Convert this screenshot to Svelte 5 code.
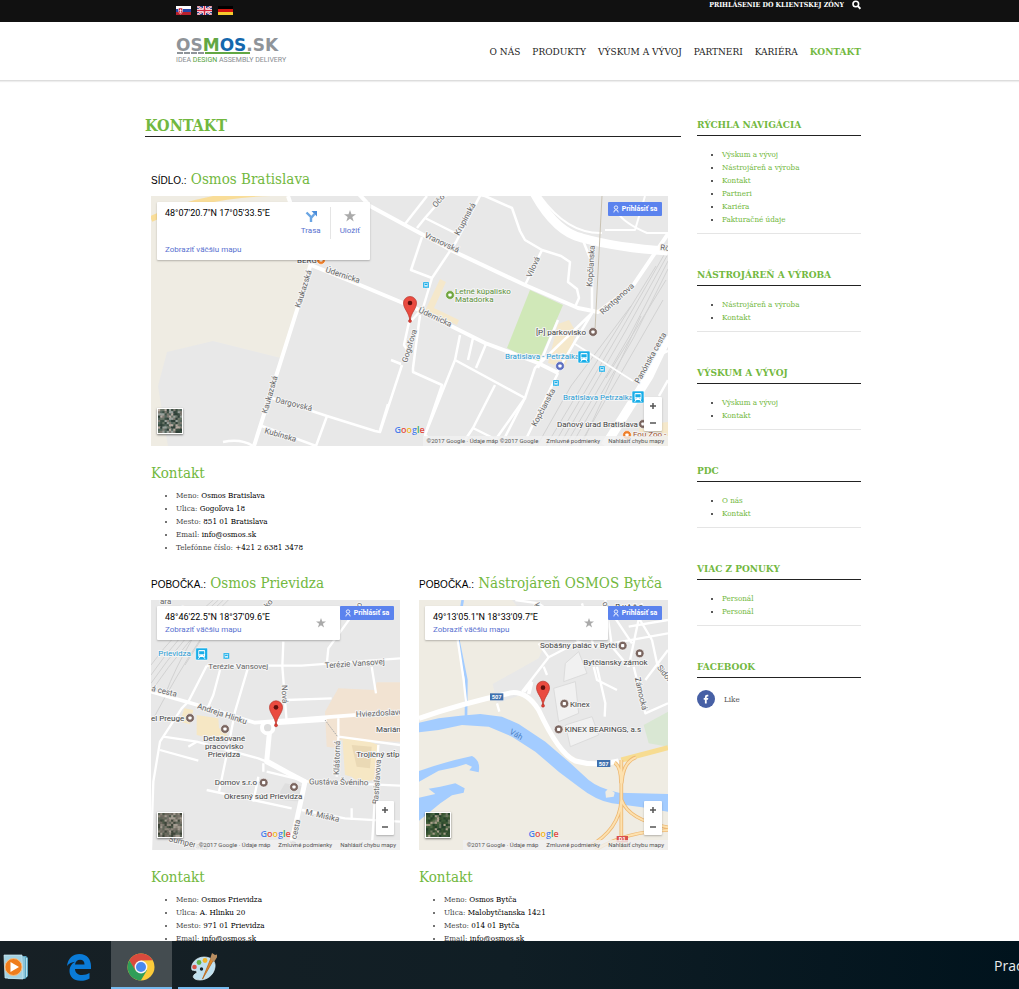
<script>
  const nav = ['O NÁS', 'PRODUKTY', 'VÝSKUM A VÝVOJ', 'PARTNERI', 'KARIÉRA', 'KONTAKT'];

  const sections = [
    { title: 'RÝCHLA NAVIGÁCIA', links: ['Výskum a vývoj', 'Nástrojáreň a výroba', 'Kontakt', 'Partneri', 'Kariéra', 'Fakturačné údaje'] },
    { title: 'NÁSTROJÁREŇ A VÝROBA', links: ['Nástrojáreň a výroba', 'Kontakt'] },
    { title: 'VÝSKUM A VÝVOJ', links: ['Výskum a vývoj', 'Kontakt'] },
    { title: 'PDC', links: ['O nás', 'Kontakt'] },
    { title: 'VIAC Z PONUKY', links: ['Personál', 'Personál'] }
  ];

  const offices = [
    {
      kind: 'SÍDLO.:', name: 'Osmos Bratislava', coords: '48°07\'20.7"N 17°05\'33.5"E', map: 'bratislava', wide: true,
      rows: [['Meno', 'Osmos Bratislava'], ['Ulica', 'Gogoľova 18'], ['Mesto', '851 01 Bratislava'], ['Email', 'info@osmos.sk'], ['Telefónne číslo', '+421 2 6381 3478']]
    },
    {
      kind: 'POBOČKA.:', name: 'Osmos Prievidza', coords: '48°46\'22.5"N 18°37\'09.6"E', map: 'prievidza',
      rows: [['Meno', 'Osmos Prievidza'], ['Ulica', 'A. Hlinku 20'], ['Mesto', '971 01 Prievidza'], ['Email', 'info@osmos.sk']]
    },
    {
      kind: 'POBOČKA.:', name: 'Nástrojáreň OSMOS Bytča', coords: '49°13\'05.1"N 18°33\'09.7"E', map: 'bytca',
      rows: [['Meno', 'Osmos Bytča'], ['Ulica', 'Malobytčianska 1421'], ['Mesto', '014 01 Bytča'], ['Email', 'info@osmos.sk']]
    }
  ];

  // Labels: x, y, text, rotation, style
  const labels = {
    bratislava: [
      [146, 67, 'BERG', 0, 'poi'],
      [174, 76, 'Údernícka', 18, 'road'], [267, 116, 'Údernícka', 25, 'road'],
      [149, 112, 'Kaukazská', -72, 'road'], [116, 218, 'Kaukazská', -74, 'road'],
      [124, 206, 'Dargovská', 14, 'road'], [113, 237, 'Kubínska', 16, 'road'],
      [256, 167, 'Gogoľova', -73, 'road'], [273, 41, 'Vranovská', 25, 'road'],
      [308, 40, 'Krupinská', -62, 'road'], [285, 12, 'Očov', -50, 'road'],
      [380, 82, 'Vilová', -65, 'road'], [441, 91, 'Kopčianska', -86, 'road'],
      [452, 119, 'Röntgenova', -42, 'road'], [385, 231, 'Kopčianska', -62, 'road'],
      [488, 188, 'Panónska cesta', -61, 'road'], [509, 54, 'Rö', 5, 'road'],
      [304, 98, 'Letné kúpalisko', 0, 'park'], [304, 106, 'Matadorka', 0, 'park'],
      [385, 139, '[P] parkovisko', 0, 'poi'],
      [354, 163, 'Bratislava - Petržalka', 0, 'rail'], [412, 204, 'Bratislava Petrzalka', 0, 'rail'],
      [406, 231, 'Daňový úrad Bratislava', 0, 'poi'], [482, 241, 'Fou Zoo -', 0, 'shop']
    ],
    prievidza: [
      [40, 182, 'Prievidza', 0, 'rail'], [190, 223, 'Terézie Vansovej', 0, 'road'],
      [540, 220, 'Terézie Vansovej', -4, 'road'], [410, 270, 'Nová', 88, 'road'],
      [18, 287, 'á cesta', 14, 'road'], [155, 340, 'Andreja Hlinku', 18, 'road'],
      [18, 377, 'el Preuge', 0, 'poi'], [633, 366, 'Hviezdoslavova', -3, 'road'],
      [693, 410, 'Marián', 0, 'poi'], [175, 437, 'Detašované', 0, 'poi'],
      [180, 461, 'pracovisko', 0, 'poi'], [188, 485, 'Prievidza', 0, 'poi'],
      [634, 487, 'Trojičný stĺp', 0, 'poi'], [582, 540, 'Kláštorná', -88, 'road'],
      [492, 568, 'Gustáva Švéniho', 1, 'road'], [699, 628, 'Rastislavova', -86, 'road'],
      [209, 571, 'Domov s.r.o', 0, 'poi'], [237, 611, 'Okresný súd Prievidza', 0, 'poi'],
      [480, 658, 'M. Mišíka', 13, 'road'], [450, 752, 'á cesta', -78, 'road'],
      [70, 738, 'Šumperská', 14, 'road'], [45, 27, 'ara', 0, 'road'],
      [105, 48, 'Nov', 20, 'road'], [360, 50, 'sko', -50, 'road'], [645, 50, 'ko', -75, 'road']
    ],
    bytca: [
      [610, 117, 'B y t č a', 0, 'poi'], [384, 235, 'Sobášny palác v Bytči', 0, 'poi'],
      [514, 284, 'Bytčiansky zámok', 0, 'poi'], [734, 293, 'Sidónie', 52, 'road'],
      [668, 324, 'Zámocká', 77, 'road'], [474, 410, 'Kinex', 0, 'poi'],
      [458, 487, 'KINEX BEARINGS, a.s', 0, 'poi'], [291, 490, 'Váh', 30, 'water'],
      [366, 104, 'ká', 60, 'road'], [570, 100, 'ova', 60, 'road']
    ]
  };

  // Aerial thumbnails: small colour patches from a repeatable sequence
  const tones = {
    bratislava: ['#3c4f43', '#6b7669', '#98a09b', '#54675f', '#b5aaa1', '#2f4038', '#7f7b72'],
    prievidza: ['#6f6b60', '#4c5747', '#8d867a', '#5f6658', '#a39b90', '#3f463a', '#77736a'],
    bytca: ['#2f4a30', '#3d5b38', '#24402a', '#506a45', '#a89f8a', '#38522f', '#6f7862']
  };
  function patches(name) {
    let seed = name.length * 131;
    return Array.from({ length: 121 }, (_, i) => {
      seed = (seed * 1103515245 + 12345) % 2147483648;
      return { x: (i % 11) * 2 + 1, y: Math.floor(i / 11) * 2 + 1, fill: tones[name][Math.floor(seed / 65536) % 7] };
    });
  }
</script>

{#snippet labelSet(name, unit)}
  {#each labels[name] as [x, y, text, turn, tone]}
    <text class="label {tone}" {x} {y} transform="rotate({turn} {x} {y})" font-size={8 * unit} stroke-width={2 * unit}>{text}</text>
  {/each}
{/snippet}

{#snippet train(x, y, s)}
  <g transform="translate({x} {y}) scale({s})">
    <rect x="-6" y="-6" width="12" height="12" rx="1" fill="#19aee8" stroke="#fff" stroke-width=".6" />
    <rect x="-3.4" y="-4" width="6.8" height="7" rx="1" fill="#fff" />
    <path d="M-2.3-2.6h4.6V0h-4.6zM-2.4 1.4h1M1.4 1.4h1" fill="#19aee8" stroke="#19aee8" stroke-width=".6" />
    <path d="M-2 3-3.3 4.8M2 3 3.3 4.8" stroke="#fff" />
  </g>
{/snippet}

{#snippet dot(x, y, s, color)}
  <g transform="translate({x} {y}) scale({s})">
    <circle r="4.4" fill={color} stroke="#fff" stroke-width=".6" />
    <rect x="-1.600" y="-1.600" width="3.200" height="3.200" rx=".8" fill="#fff" />
  </g>
{/snippet}

{#snippet pin(x, y, s)}
  <g transform="translate({x} {y}) scale({s})">
    <path d="M0 0C-1-9-6.5-12-6.5-18a6.5 6.5 0 0 1 13 0C6.500-12 1-9 0 0Z" fill="#ea4b40" stroke="#b8332a" stroke-width=".7" />
    <circle cy="-18" r="2.3" fill="#5e100d" />
    <circle r="1.500" fill="#e23d33" stroke="#a72820" stroke-width=".5" />
  </g>
{/snippet}

{#snippet bratislava()}
  <svg class="canvas" viewBox="0 0 517 250" preserveAspectRatio="xMidYMid slice" aria-hidden="true">
    <rect width="517" height="250" fill="#e8e8e8" />
    <path d="M0 0H137L160 67 146 114 130 162 62 145 16 156 7 190 17 250H0Z" fill="#efece3" />
    <path d="M0 23Q50-1 120-3" fill="none" stroke="#f9dd98" stroke-width="6" />
    <path d="M379 94 412 109 387 167 356 152Z" fill="#d0e8b8" />
    <path d="M289 83 295 86 283 112 308 124 306 129 274 115ZM407 128 418 124 425 136 414 172 397 167Z" fill="#f5e8cb" />
    <path d="M488 250V229L517 226V250Z" fill="#f5e8cb" />
    <g class="tracks">
      <path d="M517 52 470 134 402 250M517 58 474 136 408 250M517 65 479 139 414 250M517 73 483 141 420 250M515 84 455 182M505 70 440 175 395 250M512 104 428 250M480 110 420 190 386 250M490 120 430 250" />
    </g>
    <g class="streets">
      <path class="mid" d="M137 0 160 67 146 114 103 250M160 69 209 89 264 112 304 132 334 147 387 167 407 177" />
      <path class="mid" d="M205-5 219 10 254 29 304 56 374 89 427 112 447 116 481 91 504 57 517 38" />
      <path d="M317-3 334 0 361 12 369 35 374 44 391 54 410 60 419 66 417 86 426 93 428 102 424 111M391 54 374 89" />
      <path d="M331-4 305 46 281 82 272 112 260 125 258 126M271 41 260 74 281 82M266 32 274 22 304 37M274 22 295-2M254 28 276 0" />
      <path d="M431 42 441 67 441 117 406 176M441 117 384 172 374 202 340 250M407 177 376 241M407 124 387 172" />
      <path d="M258 126 253 149 257 155M251 169 229 236 224 235 176 220 118 201M240 164 250 168M237 208 229 234M176 220 165 250M111 230 165 250M72 246Q90 242 102 250" />
      <path d="M269 119 262 172 262 176 291 189 274 239M309 139 304 164 274 239 285 248M304 164 374 202 352 245M322 142 317 164M344 189 322 232 350 246M322 232 310 250M335 148 325 172" />
      <path d="M387-3Q415 38 451 37M454 34 484 34 494 0M467 17Q473 27 496 37H517M424 148 482 185" stroke-width="2" />
      <path d="M494 182Q503 160 517 155M508 200 517 184" />
      <path class="main" d="M382-5Q404 36 431 42 467 52 517 55" />
      <path class="main" d="M517 140 498 180 454 250" />
    </g>
    <path d="M451 0 444 134" stroke="#c9c2b2" />
    {@render labelSet('bratislava', 1)}
    {@render dot(170, 64, 1, '#ee7e28')}
    {@render dot(299, 99, 1, '#71a53f')}
    {@render dot(442, 136, 1, '#7b6660')}
    {@render dot(409, 170, 1, '#5d6fc0')}
    {@render dot(492, 228, 1, '#7b6660')}
    {@render dot(476, 239, 1, '#ee7e28')}
    {@render train(433, 161, 1)}
    {@render train(487, 201, 1)}
    {@render train(275, 89, 0.5)}
    {@render train(405, 187, 0.5)}
    {@render train(451, 173, 0.5)}
    {@render pin(259, 125, 1)}
  </svg>
{/snippet}

{#snippet prievidza()}
  <svg class="canvas" viewBox="18 15 747 750" preserveAspectRatio="xMidYMid slice" aria-hidden="true">
    <rect x="18" y="15" width="747" height="750" fill="#e8e8e8" />
    <path d="M540 350 580 280 690 285 695 262H765V440L590 435 580 460 545 455Z" fill="#f2e3d2" />
    <path d="M592 430 655 433 700 450 695 555 640 560 620 545 600 540ZM155 360 220 370 222 400 245 405V440L155 420ZM118 340 145 345 135 388 105 380Z" fill="#f6e7c4" />
    <path d="M620 450 680 455 675 520 635 515Z" fill="#ead9b5" />
    <path d="M405 590 420 565 480 575 470 620 410 615Z" fill="#dfdfdf" />
    <g class="tracks tripled">
      <path d="M220 15Q100 120 18 240M235 15Q110 130 18 265M250 15Q120 140 18 290M205 15Q90 110 18 210M140 135Q90 220 60 300M165 135Q100 230 20 380M190 100 120 210" />
    </g>
    <g class="streets tripled">
      <path d="M185 212H470L765 190M185 212 130 320M225 225 205 300 185 345M310 215 270 350 245 480 222 590M415 140 412 215 425 380M545 210 550 160 615 70M680 215 693 295" />
      <path d="M425 315 560 310M55 425 155 440 340 490 365 500M155 440 130 455M45 465 160 497M185 585 440 640M340 545 325 620M18 765 25 560 45 440 110 340 130 320M580 370V425L765 450M700 450 680 765M620 640V675M580 425 575 545" />
      <path d="M365 530 490 560 765 572M470 645 600 670 765 680M355 530V505M300 65 325 40" />
      <path class="mid3" d="M18 290 150 328 330 383 765 350M390 385 545 375" />
      <path class="main3" d="M375 395 365 500 480 560 465 630 435 765M365 498 450 545" />
    </g>
    <circle cx="368" cy="398" r="17" fill="#ddd" stroke="#fff" stroke-width="12" />
    <path d="M540 375 578 425" stroke="#aaa" stroke-width="3" stroke-dasharray="5 3" />
    {@render labelSet('prievidza', 3)}
    {@render train(170, 177, 3)}
    {@render train(244, 183, 1.5)}
    {@render dot(135, 369, 3, '#7b6660')}
    {@render dot(240, 402, 3, '#7b6660')}
    {@render dot(356, 563, 3, '#7b6660')}
    {@render dot(447, 576, 3, '#7b6660')}
    {@render pin(393, 391, 3)}
  </svg>
{/snippet}

{#snippet bytca()}
  <svg class="canvas" viewBox="21 90 747 750" preserveAspectRatio="xMidYMid slice" aria-hidden="true">
    <rect x="21" y="90" width="747" height="750" fill="#efece3" />
    <path d="M300 90H768V530L620 570 520 580 460 545 400 450 365 385 340 370 255 400 242 342 380 265 400 220Z" fill="#e8e8e8" />
    <path d="M695 465 768 425V530L710 520Z" fill="#d9e7d3" />
    <path d="M425 355 490 335 500 430 440 455ZM460 280 500 245 525 310 455 335ZM460 465 540 440 560 495 475 530Z" fill="#f1f1f1" stroke="#dcdcdc" stroke-width="3" />
    <path d="M152 90 135 190 163 330 162 440" fill="none" stroke="#a3ccff" stroke-width="8" />
    <path d="M21 458 80 445 145 437 205 432 270 440 320 462 400 515 470 575 530 630Q560 655 620 668L768 672V725L690 712 600 700Q550 690 500 650L440 605 370 545 300 500 230 470 150 465 80 480 21 487Z" fill="#a3ccff" />
    <path d="M21 603Q100 575 180 558Q207 572 200 607L172 601 180 590 162 582 130 592 80 602 21 635Z" fill="#a3ccff" />
    <path d="M21 683 70 672 50 656 85 650 130 640 158 655 155 668 120 676 85 700 21 752Z" fill="#a3ccff" />
    <path d="M580 665 590 655 608 668 605 680 582 683Z" fill="#efece3" />
    <g class="streets tripled">
      <path d="M135 195 155 330 163 405M310 90 380 100 450 150 500 215M380 220 410 262 330 365M500 215 410 262M395 290 405 315M500 215 545 230 768 190M510 100 545 230M580 90 600 230 650 290M650 170 768 150M690 100 650 290M720 210 735 280 768 320M555 290 580 400 578 440M545 290 555 330 615 360M665 290 700 430 768 400M660 110 720 210M600 130 660 220M255 400 262 425M768 240 700 330" />
      <path class="main3" d="M21 445Q150 400 300 368 345 365 380 420 440 550 490 573 550 590 620 573" />
      <path class="mid3" d="M335 365 360 335M350 372 358 340" />
    </g>
    <path d="M628 570 768 533" fill="none" stroke="#f7dc91" stroke-width="15" />
    <g fill="none" stroke="#edb873" stroke-width="11">
      <path d="M628 570V840M608 578Q627 590 627 640M672 562Q633 575 629 640M628 690Q622 780 530 830M629 690Q650 750 768 772M768 780Q640 785 550 840" />
    </g>
    <g fill="none" stroke="#fde1af" stroke-width="6">
      <path d="M628 570V840M608 578Q627 590 627 640M672 562Q633 575 629 640M628 690Q622 780 530 830M629 690Q650 750 768 772M768 780Q640 785 550 840" />
    </g>
    {@render labelSet('bytca', 3)}
    {#each [[234, 370], [555, 570]] as [x, y]}
      <rect {x} {y} width="40" height="21" fill="#3f70ae" />
      <text class="shield" x={x + 20} y={y + 17}>507</text>
    {/each}
    <rect x="614" y="798" width="34" height="19" fill="#d9504c" />
    <text class="shield" x="631" y="814">D1</text>
    {@render dot(632, 227, 3, '#7b6660')}
    {@render dot(683, 250, 3, '#7b6660')}
    {@render dot(457, 401, 3, '#7b6660')}
    {@render dot(440, 478, 3, '#7b6660')}
    {@render pin(393, 407, 3)}
  </svg>
{/snippet}

{#snippet star()}
  <svg class="star" viewBox="0 0 12 12" aria-hidden="true"><path d="M6 0 7.500 4.300H12L8.300 7 9.700 11.500 6 8.800 2.300 11.500 3.700 7 0 4.300H4.500Z" fill="#aaa" /></svg>
{/snippet}

<div class="screen">
  <div class="page">
    <div class="topbar">
      <div class="inner">
        <div class="flags">
          <a href="#sk" aria-label="Slovensky">
            <svg viewBox="0 0 15 9"><path fill="#fff" d="M0 0h15v3H0z" /><path fill="#2545a8" d="M0 3h15v3H0z" /><path fill="#b8202e" d="M0 6h15v3H0z" /><path fill="#d5263b" stroke="#fff" stroke-width=".5" d="M2.500 2h4v3q0 2-2 3-2-1-2-3z" /><path stroke="#fff" stroke-width=".7" d="M4.500 3v4M3.300 4.500h2.400" /></svg>
          </a>
          <a href="#en" aria-label="English">
            <svg viewBox="0 0 15 9"><path fill="#2a3f86" d="M0 0h15v9H0z" /><path stroke="#fff" stroke-width="2" d="m0 0 15 9M15 0 0 9" /><path stroke="#cf2540" stroke-width=".7" d="m0 0 15 9M15 0 0 9" /><path stroke="#fff" stroke-width="3" d="M7.500 0v9M0 4.500h15" /><path stroke="#cf2540" stroke-width="1.600" d="M7.500 0v9M0 4.500h15" /></svg>
          </a>
          <a href="#de" aria-label="Deutsch">
            <svg viewBox="0 0 15 9"><path d="M0 0h15v3H0z" /><path fill="#d2150f" d="M0 3h15v3H0z" /><path fill="#f6cb2e" d="M0 6h15v3H0z" /></svg>
          </a>
        </div>
        <div class="account">
          <a href="#login">PRIHLÁSENIE DO KLIENTSKEJ ZÓNY</a>
          <button aria-label="Hľadať">
            <svg viewBox="0 0 9 10"><circle cx="3.800" cy="4" r="2.800" fill="none" stroke="#fff" stroke-width="1.600" /><path d="m6 6.200 2.400 2.600" stroke="#fff" stroke-width="1.900" /></svg>
          </button>
        </div>
      </div>
    </div>

    <header>
      <div class="inner">
        <a class="logo" href="#home" aria-label="Osmos.sk">
          <svg viewBox="0 0 112 26">
            <text class="brand" x="0" y="13"><tspan fill="#8f9499">OS</tspan><tspan fill="#62a744">M</tspan><tspan fill="#1468ad">OS</tspan><tspan fill="#8f9499">.SK</tspan></text>
            <path d="M1 15h28" stroke="#8f9499" stroke-width="2" stroke-dasharray="6 1" />
            <path d="M29 15h45" stroke="#62a744" stroke-width="2" />
            <text class="tagline" x="0" y="24">IDEA <tspan fill="#55a13a">DESIGN</tspan> ASSEMBLY DELIVERY</text>
          </svg>
        </a>
        <nav>
          {#each nav as item}
            <a href="#nav" class:current={item === 'KONTAKT'}>{item}</a>
          {/each}
        </nav>
      </div>
    </header>

    <div class="content">
      <main>
        <h1>KONTAKT</h1>
        <div class="offices">
          {#each offices as office}
            <section class:wide={office.wide}>
              <h2><span>{office.kind}</span> {office.name}</h2>
              <div class="map">
                {#if office.map === 'bratislava'}{@render bratislava()}{:else if office.map === 'prievidza'}{@render prievidza()}{:else}{@render bytca()}{/if}
                <div class="place">
                  <div class="where">
                    <strong>{office.coords}</strong>
                    <a href="#map">Zobraziť väčšiu mapu</a>
                  </div>
                  {#if office.wide}
                    <div class="actions">
                      <button>
                        <svg viewBox="0 0 12 12" aria-hidden="true"><path d="M6 12V7L1.500 2.500M6 8 9.500 4" fill="none" stroke="#6aa5e3" stroke-width="2.400" /><path d="M6.500 1H12v5.500z" fill="#4a8ddb" /></svg>
                        Trasa
                      </button>
                      <button>{@render star()}Uložiť</button>
                    </div>
                  {:else}
                    <button class="save" aria-label="Uložiť">{@render star()}</button>
                  {/if}
                </div>
                <button class="signin">
                  <svg viewBox="0 0 7 9" aria-hidden="true"><path d="M3.500.8a2 2 0 1 1 0 4 2 2 0 0 1 0-4M1 8.500q0-3 2.500-3T6 8.500" fill="none" stroke="#fff" /></svg>
                  Prihlásiť sa
                </button>
                <button class="aerial" aria-label="Satelit">
                  <svg viewBox="1 1 22 22">
                    {#each patches(office.map) as p}
                      <rect x={p.x} y={p.y} width="3" height="3" fill={p.fill} />
                    {/each}
                  </svg>
                </button>
                <div class="google"><i>G</i><i>o</i><i>o</i><i>g</i><i>l</i><i>e</i></div>
                <div class="zoom">
                  <button aria-label="Priblížiť"><svg viewBox="0 0 8 8"><path d="M4 1v6M1 4h6" stroke="#555" stroke-width="1.500" /></svg></button>
                  <button aria-label="Oddialiť"><svg viewBox="0 0 8 8"><path d="M1 4h6" stroke="#555" stroke-width="1.500" /></svg></button>
                </div>
                <div class="credits">
                  <span>©2017 Google · Údaje máp{office.wide ? ' ©2017 Google' : ''}</span>
                  <a href="#terms">Zmluvné podmienky</a>
                  <a href="#report">Nahlásiť chybu mapy</a>
                </div>
              </div>
              <h3>Kontakt</h3>
              <ul class="details">
                {#each office.rows as [key, value]}
                  <li>{key}: <b>{value}</b></li>
                {/each}
              </ul>
            </section>
          {/each}
        </div>
      </main>

      <aside>
        {#each sections as section}
          <section>
            <h4>{section.title}</h4>
            <ul>
              {#each section.links as link}
                <li><a href="#link">{link}</a></li>
              {/each}
            </ul>
          </section>
        {/each}
        <div class="social">
          <h4>FACEBOOK</h4>
          <a href="#like">
            <svg viewBox="0 0 18 18" aria-hidden="true"><circle cx="9" cy="9" r="9" fill="#4760a5" /><path d="M7.900 13.500V9.700H6.700V8h1.200V6.900q0-2.200 2.100-2.200h1.300v1.700h-.8q-.8 0-.8.8V8h1.600l-.3 1.700H9.700v3.800z" fill="#fff" /></svg>
            Like
          </a>
        </div>
      </aside>
    </div>
  </div>

  <footer class="taskbar">
    <div class="apps">
      <button aria-label="Windows Media Player">
        <svg viewBox="2 0 28 28">
          <path d="M6 3h19l2 2v18l-3 3H7z" fill="#5fa7c2" /><path d="M23 4v21M25.500 5v19" stroke="#b9e3ef" />
          <path d="M3 2h18l1 24-18-1z" fill="#a4d2e2" stroke="#d3edf5" stroke-width=".7" />
          <circle cx="12.500" cy="14" r="8.500" fill="#ef7d1c" stroke="#f9bd7d" /><path d="m9.500 9 8.500 5-8.500 5z" fill="#fff" />
        </svg>
      </button>
      <button aria-label="Microsoft Edge">
        <svg viewBox="0 0 28 28"><path d="M2 13C3 5 8 1 14.500 1 22 1 26 6.500 26 13v3H10c.2 4 3.300 6 7 6 3 0 5.500-.8 7.500-2v5.500C22 27 19 27.800 15.500 27.800 8.500 27.800 4.500 23.500 4.500 18c0-4.300 2.300-7.500 5.700-9.300C6.800 9 4 10.500 2 13Zm8-1.500h9.500C19.500 8.500 18 6.700 15 6.700c-2.700 0-4.500 1.800-5 4.800Z" fill="#0a7bd8" /></svg>
      </button>
      <button class="active" aria-label="Google Chrome">
        <svg viewBox="0 0 28 28">
          <circle cx="14" cy="14" r="13.500" fill="#fbcb3a" />
          <path d="M2.300 7.200A13.500 13.500 0 0 1 25.700 7.200L14 7.500 8 17.500Z" fill="#d94a3d" />
          <path d="M2.300 7.200A13.500 13.500 0 0 0 13.800 27.500L20 17.200 8.500 17.500Z" fill="#2f9e58" />
          <circle cx="14" cy="14" r="6.400" fill="#f5f5f5" /><circle cx="14" cy="14" r="5" fill="#4889ee" />
        </svg>
      </button>
      <button class="open" aria-label="Maľovanie">
        <svg viewBox="0 0 28 28">
          <path d="M3 17C1 11 7 4 15 4c7 0 12 4 11 10-1 8-8 13-15 13-6 0-8-3-6-5 1-2 3-1 3-3s-3-1-5-2Z" fill="#bfe0ef" stroke="#e6f5fb" stroke-width=".7" />
          <circle cx="5.500" cy="14" r="2.300" fill="#d95348" /><circle cx="10" cy="9.500" r="2.400" fill="#62b54a" /><circle cx="16" cy="7.500" r="2.400" fill="#f1b52b" /><circle cx="12.500" cy="16" r="1.700" fill="#17252c" />
          <path d="M22 5 13.500 26 17 20 25 6Z" fill="#e08b2c" stroke="#b9651a" stroke-width=".8" />
          <path d="m21 6 2-6 3 2 4-1-5 8z" fill="#b98e61" />
        </svg>
      </button>
    </div>
    <span class="desktop">Prac</span>
  </footer>
</div>

<style>
  :global(body) { background: #fff; }
  .screen {
    height: 100vh;
    display: flex;
    flex-direction: column;
    font-family: "Roboto Slab", "DejaVu Serif Condensed", "DejaVu Serif", serif;
    font-size: 8px;
    line-height: 13px;
    color: #222;
  }
  .screen * { box-sizing: border-box; }
  a { color: inherit; text-decoration: none; }
  button { border: 0; padding: 0; margin: 0; background: none; color: inherit; font: inherit; cursor: pointer; }
  svg { display: block; }
  h1, h2, h3, h4, ul { margin: 0; padding: 0; font-weight: 400; }
  .page { flex: 1; min-height: 0; overflow: hidden; }
  .topbar, header, .content { padding-right: 13px; }
  .inner { max-width: 716px; margin: 0 auto; padding-left: 31px; display: flex; justify-content: space-between; }

  .topbar { background: #111; color: #fff; }
  .topbar .inner { height: 22px; }
  .flags { display: flex; gap: 6px; padding-top: 6px; }
  .flags svg { width: 15px; height: 9px; }
  .account { display: flex; align-items: center; gap: 8px; height: 9px; font-size: 7px; font-weight: 700; }
  .account svg { width: 9px; height: 10px; }

  header { border-bottom: 1px solid #ddd; box-shadow: 0 1px 1px #eee; }
  header .inner { height: 58px; align-items: center; }
  .logo svg { width: 112px; height: 26px; overflow: visible; }
  .brand { font: 700 17px "DejaVu Sans", sans-serif; }
  .tagline { font: 7px Roboto, sans-serif; fill: #888c90; }
  nav { display: flex; gap: 12px; font-size: 10px; color: #222; white-space: nowrap; }
  .current { color: #72b840; font-weight: 700; }

  .content { max-width: 729px; margin: 0 auto; padding-top: 34px; display: flex; gap: 16px; }
  main { flex: 1; min-width: 0; }
  h1 { font-size: 16px; font-weight: 700; line-height: 21px; color: #72b840; border-bottom: 1px solid #222; }
  .offices { display: grid; grid-template-columns: 1fr 1fr; gap: 18px 19px; padding: 31px 13px 19px 6px; }
  .offices section { min-width: 0; }
  .wide { grid-column: 1 / -1; }
  h2, h3 { font-size: 15px; line-height: 22px; color: #72b840; white-space: nowrap; }
  h2 { height: 22px; margin-bottom: 6px; }
  h2 span { font-family: "Liberation Sans", sans-serif; font-size: 10px; color: #000; }
  h3 { margin: 16px 0 5px; }
  ul { padding-left: 25px; }
  .details { color: #444; }
  .details b { font-weight: 400; color: #000; }

  aside { width: 164px; }
  aside section { border-bottom: 1px solid #e5e5e5; padding-bottom: 7px; margin-bottom: 31px; }
  h4 { font-size: 10px; font-weight: 700; line-height: 20px; color: #72b840; border-bottom: 1px solid #222; margin-bottom: 12px; white-space: nowrap; }
  aside li a { color: #72b840; }
  .social a { display: flex; align-items: center; gap: 9px; color: #555; }
  .social svg { width: 18px; height: 18px; }

  .map { position: relative; height: 250px; overflow: hidden; font-family: Roboto, sans-serif; }
  .canvas { width: 100%; height: 100%; }
  .label { font-family: Roboto, sans-serif; fill: #666; stroke: #f4f4f4; paint-order: stroke; stroke-linejoin: round; }
  .poi { fill: #444; }
  .park { fill: #5d913a; }
  .rail { fill: #279bd3; }
  .shop { fill: #a0522d; }
  .water { fill: #4d82c4; stroke: none; }
  .shield { font: 700 17px Roboto, sans-serif; fill: #fff; text-anchor: middle; }
  .streets { fill: none; stroke: #fff; stroke-width: 2.500px; stroke-linejoin: round; }
  .streets .mid { stroke-width: 4px; }
  .streets .main { stroke-width: 9px; }
  .tracks { fill: none; stroke: #d2d2d2; }
  .streets.tripled { stroke-width: 7px; }
  .tracks.tripled { stroke-width: 3px; }
  .mid3 { stroke-width: 11px; }
  .main3 { stroke-width: 15px; }

  .place {
    position: absolute; top: 6px; left: 6px; width: 183px; height: 34px; padding: 5px 14px 5px 8px;
    display: flex; justify-content: space-between; background: #fff; border-radius: 1px; box-shadow: 0 1px 2px rgba(0, 0, 0, .25);
  }
  .wide .place { width: 213px; height: 58px; padding-right: 8px; }
  .where { display: flex; flex-direction: column; justify-content: space-between; }
  .where strong { font-size: 9px; font-weight: 400; color: #000; white-space: nowrap; }
  .where a, .actions { font-size: 8px; line-height: 10px; color: #5870cf; }
  .actions { display: flex; }
  .actions button { display: flex; flex-direction: column; align-items: center; gap: 4px; height: 32px; padding: 3px 9px 0; }
  .actions button + button { border-left: 1px solid #e5e5e5; padding-right: 2px; }
  .actions svg { width: 12px; height: 12px; }
  .save svg { width: 10px; height: 10px; }
  .save { align-self: center; }
  .signin {
    position: absolute; top: 6px; right: 6px; width: 54px; height: 14px; border-radius: 1px; background: #5b83ee;
    color: #fff; font-size: 7px; font-weight: 700; display: flex; align-items: center; justify-content: center; gap: 3px; white-space: nowrap;
  }
  .signin svg { width: 6px; height: 8px; }
  .aerial { position: absolute; left: 6px; bottom: 12px; width: 26px; height: 26px; border: 1px solid #fff; box-shadow: 0 1px 2px rgba(0, 0, 0, .5); }
  .aerial svg { width: 24px; height: 24px; }
  .google { position: absolute; left: 0; right: 0; bottom: 10px; text-align: center; font: 600 9px/13px "Open Sans", sans-serif; color: #4b7fe8; text-shadow: 0 0 1px #fff; }
  .google i { font-style: normal; }
  .google i:nth-child(2), .google i:nth-child(6) { color: #e0483b; }
  .google i:nth-child(3) { color: #edb219; }
  .google i:nth-child(5) { color: #35a353; }
  .zoom { position: absolute; right: 6px; bottom: 15px; width: 18px; height: 34px; display: flex; flex-direction: column; background: #fff; border-radius: 1px; box-shadow: 0 1px 2px rgba(0, 0, 0, .25); }
  .zoom button { flex: 1; display: grid; place-items: center; }
  .zoom svg { width: 8px; height: 8px; }
  .credits { position: absolute; right: 0; bottom: 0; display: flex; gap: 8px; padding: 0 4px; font-size: 6px; line-height: 10px; color: #555; background: rgba(240, 240, 240, .8); white-space: nowrap; }

  .taskbar { flex: none; height: 48px; display: flex; justify-content: space-between; background: linear-gradient(90deg, #172025, #101e25 50%, #00131d); }
  .apps { display: flex; gap: 1px; margin-left: -13px; }
  .apps button { width: 61px; padding: 3px 2px 0 0; display: grid; place-items: center; }
  .apps svg { width: 28px; height: 28px; }
  .apps .active { background: linear-gradient(#76b9ed, #76b9ed) center bottom / 100% 2px no-repeat #444c50; }
  .apps .open { background: linear-gradient(#76b9ed, #76b9ed) center bottom / 51px 2px no-repeat; }
  .desktop { width: 25px; overflow: hidden; color: #e8ecee; font: 14px/50px "Open Sans", sans-serif; white-space: nowrap; }
</style>
